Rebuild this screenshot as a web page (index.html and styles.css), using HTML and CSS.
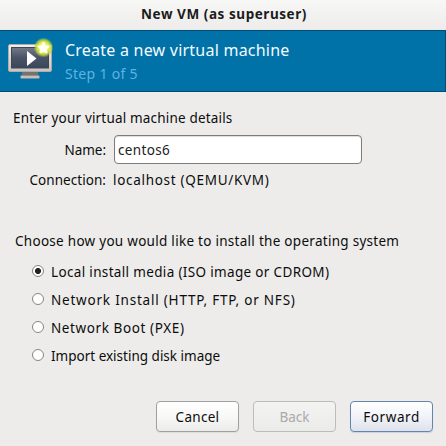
FILE: index.html
```html
<!DOCTYPE html>
<html lang="en">
<head>
<meta charset="utf-8">
<title>New VM</title>
<link rel="stylesheet" href="styles.css">
</head>
<body>
<div class="window">
  <div class="titlebar"><span>New VM (as superuser)</span></div>
  <header class="banner">
    <svg class="vm-icon" width="50" height="46" viewBox="0 0 50 46">
      <defs>
        <linearGradient id="screen" x1="0" y1="0" x2="0" y2="1"><stop offset="0" stop-color="#737b88"/><stop offset=".5" stop-color="#4a5365"/><stop offset="1" stop-color="#3b465c"/></linearGradient>
        <linearGradient id="frame" x1="0" y1="0" x2="0" y2="1"><stop offset="0" stop-color="#f0f0f0"/><stop offset="1" stop-color="#c6c5c3"/></linearGradient>
        <radialGradient id="glow"><stop offset="0" stop-color="#fbfac0"/><stop offset=".55" stop-color="#e6ec4a"/><stop offset=".78" stop-color="#c3d73a" stop-opacity=".75"/><stop offset="1" stop-color="#8fc55a" stop-opacity="0"/></radialGradient>
      </defs>
      <path d="M17 35h16v5H17z" fill="#77716e"/>
      <rect x="15.500" y="38.500" width="19" height="3" rx="1" fill="#c3bfbb" stroke="#81858a" stroke-width=".5"/>
      <rect x="3.500" y="7.500" width="43" height="27" rx="1.500" fill="url(#frame)" stroke="#b4aba4"/>
      <rect x="6.500" y="10.500" width="37" height="20.500" fill="url(#screen)" stroke="#3e4654"/>
      <path d="M22 14v15l9.500-7.500z" fill="#fff"/>
      <circle cx="38.500" cy="10.500" r="10" fill="url(#glow)"/>
      <path d="M38.500 5.500l1.600 3.400 3.700.5-2.700 2.600.6 3.700-3.200-1.700-3.200 1.700.6-3.700-2.700-2.600 3.700-.5z" fill="#fffff4" stroke="#fffff4" stroke-width="1.500" stroke-linejoin="round"/>
    </svg>
    <div>
      <h1>Create a new virtual machine</h1>
      <p class="step">Step 1 of 5</p>
    </div>
  </header>
  <main class="page">
    <p class="intro">Enter your virtual machine details</p>
    <div class="fields">
      <label class="label name-label" for="name">Name:</label>
      <input id="name" type="text" value="centos6">
      <span class="label">Connection:</span>
      <span class="connection">localhost (QEMU/KVM)</span>
    </div>
    <p class="choose">Choose how you would like to install the operating system</p>
    <div class="options">
      <label class="option local"><input type="radio" name="method" checked><span>Local install media (ISO image or CDROM)</span></label>
      <label class="option network"><input type="radio" name="method"><span>Network Install (HTTP, FTP, or NFS)</span></label>
      <label class="option pxe"><input type="radio" name="method"><span>Network Boot (PXE)</span></label>
      <label class="option import"><input type="radio" name="method"><span>Import existing disk image</span></label>
    </div>
  </main>
  <footer class="actions">
    <button class="cancel">Cancel</button>
    <button class="back" disabled>Back</button>
    <button class="forward">Forward</button>
  </footer>
</div>
</body>
</html>
```
FILE: styles.css
```css
* { box-sizing: border-box; }
body { margin: 0; font: 13.5px/18px "Noto Sans", sans-serif; color: #0c0c0c; }
h1, p { margin: 0; white-space: nowrap; }
.window { width: 446px; height: 446px; background: #edeceb; display: flex; flex-direction: column; overflow: hidden; }
.titlebar { height: 30px; padding: 5px 0 0 141px; background: linear-gradient(#f7f7f6, #edeceb); font-weight: bold; letter-spacing: .56px; color: #1c1c1c; white-space: nowrap; }
.banner { height: 62px; display: flex; background: #0072a8; border: 1px solid #044b70; border-left: 0; padding: 6px 0 0 5px; }
.vm-icon { flex: none; margin-right: 10px; }
.banner h1 { margin-top: 1px; font-size: 16px; font-weight: normal; line-height: 24px; letter-spacing: .23px; color: #f4fbff; }
.step { margin-top: 2px; font-size: 14px; line-height: 20px; letter-spacing: .3px; color: #5fb2e2; }
.page { flex: 1; padding: 17px 14px 0 13px; }
.intro { letter-spacing: .18px; }
.fields { display: grid; grid-template-columns: 93px 248px; column-gap: 8px; row-gap: 7px; align-items: center; margin-top: 8px; white-space: nowrap; }
.label { text-align: right; letter-spacing: .05px; }
.name-label { letter-spacing: -.03px; }
#name { width: 248px; height: 29px; padding: 0 4px 0 3px; border: 1px solid #7c7c7a; border-radius: 4px; outline: 0; background: #fff; box-shadow: inset 0 1px 1px #ddd; font: inherit; letter-spacing: .35px; color: #222; }
.connection { letter-spacing: .7px; margin-left: -1px; }
.choose { margin: 43px 0 0 2px; letter-spacing: .28px; }
.options { margin: 8px 0 0 19px; }
.option { height: 28px; display: flex; align-items: center; gap: 7px; white-space: nowrap; }
.option input { appearance: none; width: 12px; height: 12px; margin: -2px 0 0; border: 1px solid #858583; border-radius: 50%; background: #fff; flex: none; }
.option input:checked { background: radial-gradient(circle, #222 2.600px, #fff 3.500px); }
.local { letter-spacing: .34px; }
.network { letter-spacing: .79px; }
.pxe { letter-spacing: .6px; }
.import { letter-spacing: 0; }
.actions { display: flex; justify-content: flex-end; gap: 14px; padding: 0 13px 14px 0; }
button { width: 83px; height: 31px; padding: 0; border: 1px solid #a0a09e; border-radius: 4px; background: linear-gradient(#fff, #f8f8f7 50%, #ebebea); box-shadow: 0 1px 1px #dededd; font: inherit; color: #0c0c0c; }
.cancel { letter-spacing: .29px; }
.back { letter-spacing: 0; color: #aaa; border-color: #bcbcba; background: linear-gradient(#f3f3f2, #ebebea); box-shadow: none; }
.forward { letter-spacing: .59px; border-color: #6485ad; background: linear-gradient(#fff, #f1f3f9 50%, #dfe2eb); box-shadow: 0 1px 1px #cbd3df; }
```
